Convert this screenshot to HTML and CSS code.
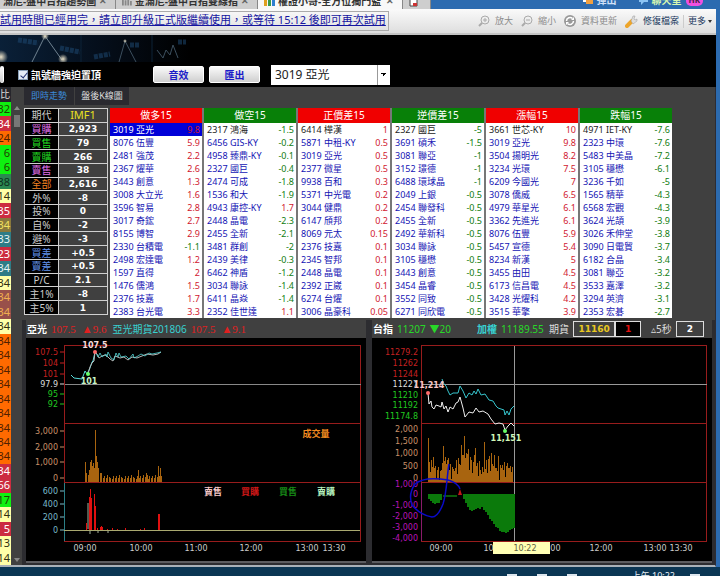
FILE: index.html
```html
<!DOCTYPE html>
<html lang="zh-Hant">
<head>
  <meta charset="UTF-8" />
  <title>權證小哥-全方位獨門監控</title>
  <link rel="stylesheet" href="styles.css">
</head>
<body>
  <nav class="tabs">
    <div class="tab tab-first"><span>滿尼-盤中台指趨勢圖</span><b>✕</b></div>
    <div class="tab">
      <svg width="11" height="10" viewBox="0 0 11 10"><path d="M0 0h2v9H0zM3 3h2v6H3zM6 1h2v8H6zM9 4h2v5H9z" fill="#888"/></svg>
      <span>金滿尼-盤中台指雙線指</span><b>✕</b>
    </div>
    <div class="tab active">
      <svg width="11" height="10" viewBox="0 0 11 10"><path d="M0 1h3v8H0z" fill="#e0a020"/><path d="M4 3h3v6H4z" fill="#3a9a4a"/><path d="M8 0h3v9H8z" fill="#2f7fd0"/></svg>
      <span>權證小哥-全方位獨門監</span><b>✕</b>
    </div>
    <div class="tab tab-new">
      <svg width="9" height="10" viewBox="0 0 9 10"><path d="M1 0v9h7V0" fill="#fff" stroke="#444"/><path d="M4 6h4v3H4z" fill="#c33"/></svg>
    </div>
    <div class="top-links">
      <svg width="10" height="8" viewBox="0 0 10 8"><path d="M0 0h6v4H0z" fill="#fff"/><path d="M3 2h7v4H3z" fill="#f0a040"/></svg>
      <a class="popout" href="#">彈出</a>
      <svg width="9" height="8" viewBox="0 0 9 8"><path d="M0 0h9v4H5L2 7V4H0z" fill="#8cc4f4"/></svg>
      <a class="chat" href="#">聊天室</a>
      <span class="badge">HK</span>
    </div>
  </nav>

  <header class="toolbar">
    <a class="notice" href="#">試用時間已經用完，請立即升級正式版繼續使用，或等待 15:12 後即可再次試用</a>
    <div class="tools">
      <button class="tool off"><svg width="12" height="12" viewBox="0 0 12 12" fill="none" stroke="#aaa"><circle cx="7" cy="5" r="4"/><path d="M5 5h4M7 3v4"/><path d="M4 8L1 11" stroke-width="2"/></svg>放大</button>
      <button class="tool off"><svg width="12" height="12" viewBox="0 0 12 12" fill="none" stroke="#aaa"><circle cx="7" cy="5" r="4"/><path d="M5 5h4"/><path d="M4 8L1 11" stroke-width="2"/></svg>縮小</button>
      <button class="tool off"><svg width="12" height="12" viewBox="0 0 12 12"><circle cx="6" cy="6" r="6" fill="#999"/><path d="M2.500 6a3.500 3.500 0 0 1 6-2.500M9.500 6a3.500 3.500 0 0 1-6 2.500" fill="none" stroke="#fff" stroke-width="1.500"/><path d="M7 5h3V2zM5 7H2v3z" fill="#fff"/></svg>資料更新</button>
      <button class="tool"><svg width="13" height="13" viewBox="0 0 13 13"><path d="M2 11L7 6" stroke="#eda52a" stroke-width="4" stroke-linecap="round"/><path d="M6 6L8 1l2 0-1 3 1 1 2-1 0 2-4 3z" fill="#ddd" stroke="#999" stroke-width=".5"/></svg>修復檔案</button>
      <button class="tool more">更多<i class="caret"></i></button>
    </div>
  </header>

  <div class="banner">
    <svg width="190" height="27" viewBox="0 0 190 27">
      <defs>
        <linearGradient id="night"><stop offset="0" stop-color="#0a2038"/><stop offset=".5" stop-color="#050f1c"/><stop offset="1" stop-color="#000"/></linearGradient>
        <radialGradient id="glow"><stop offset="0" stop-color="#e8e0c8"/><stop offset="1" stop-color="#e8e0c8" stop-opacity="0"/></radialGradient>
      </defs>
      <rect width="190" height="27" fill="url(#night)"/>
      <path d="M18 5l20 3M60 13l20 4M94 22l16-3M130 10h10M178 7h8" stroke="#1f4d78" stroke-width="5" stroke-dasharray="4 1" opacity=".5"/>
      <path d="M81 0v27M152 0v27" stroke="#0d2236"/>
      <path d="M32 27L45 1L62 25" fill="none" stroke="#6f8290"/>
      <path d="M119 27L125 6L136 27M157 15l6 8 3-8 4 5 3-10 5 13" fill="none" stroke="#3c4f5e"/>
      <circle cx="1" cy="22" r="7" fill="url(#glow)"/><circle cx="63" cy="24" r="5" fill="url(#glow)"/>
      <circle cx="45" cy="1" r="4" fill="url(#glow)"/><circle cx="125" cy="6" r="2" fill="url(#glow)"/>
    </svg>
  </div>

  <form class="controls">
    <button type="button" class="btn btn-cut" aria-label="上一頁"></button>
    <label class="pin"><input type="checkbox" checked>訊號牆強迫置頂</label>
    <button type="button" class="btn">音效</button>
    <button type="button" class="btn">匯出</button>
    <select class="stock" aria-label="股票"><option>3019 亞光</option></select>
  </form>

  <main>
    <aside class="signal">
      <div class="signal-list">
        <div class="signal-head">比</div>
        <div class="signal-rows" id="signalRows"></div>
      </div>
      <div class="scroll"><i class="up"></i><i class="thumb"></i><i class="down"></i></div>
    </aside>

    <section class="content">
      <div class="subtabs">
        <button class="on">即時走勢</button>
        <button>盤後K線圖</button>
      </div>

      <div class="boards">
        <table class="stats">
          <tr><th>期代</th><td class="imf">IMF1</td></tr>
          <tr><th class="violet">買購</th><td>2,923</td></tr>
          <tr><th class="lime">買售</th><td>79</td></tr>
          <tr><th class="lime">賣購</th><td>266</td></tr>
          <tr><th class="violet">賣售</th><td>38</td></tr>
          <tr><th class="orange">全部</th><td>2,616</td></tr>
          <tr><th>外%</th><td>-8</td></tr>
          <tr><th>投%</th><td>0</td></tr>
          <tr><th>自%</th><td>-2</td></tr>
          <tr><th>避%</th><td>-3</td></tr>
          <tr><th class="blue">買差</th><td>+0.5</td></tr>
          <tr><th class="blue">賣差</th><td>+0.5</td></tr>
          <tr><th>P/C</th><td>2.1</td></tr>
          <tr><th>主1%</th><td>-8</td></tr>
          <tr><th>主5%</th><td>1</td></tr>
        </table>
        <div class="quotes" id="quotes"></div>
      </div>

      <div class="charts">
        <article class="panel">
          <div class="info">
            <b>亞光</b><span class="serif">107.5</span><span class="serif">▲9.6</span>
            <span class="cyan">亞光期貨201806</span><span class="serif">107.5</span><span class="serif">▲9.1</span>
          </div>
          <svg viewBox="26 338 340 223" id="stockChart">
            <rect x="26" y="338" width="340" height="223" fill="#000"/>
            <g fill="none" stroke="#981c1c" shape-rendering="crispEdges">
              <path d="M64.500 345.500H360.500V541.500H64.500zM64.500 423.500H360.500M64.500 482.500H360.500"/>
              <path d="M64.500 483V541" stroke="#2b7f86"/>
              <path d="M64.500 384.500H360.500" stroke="#888"/>
            </g>
            <g class="bars" fill="#a8640f"></g>
            <g class="bars2" fill="#e01010"></g>
            <path d="M64 530.500H360" stroke="#a9a970"/>
            <path d="M88 503v26M90 531v3M98 531v2M108 531v2" stroke="#e8ffe0" stroke-opacity=".7"/>
            <path d="M71 375L74 378L82 379L85 371L87 374L90 368L92 362L93 361L95 352" fill="none" stroke="#56d8d8"/>
            <path d="M88 374L90 367L92 363L94 361L95 352L97 354L99 358L102 356L105 355L108 357L110 359L113 361L115 356L120 358L124 357L128 360L132 357L137 358L142 356L147 354L153 355L158 354L161 352" fill="none" stroke="#b8b8b8"/>
            <path d="M96 353L98 357L100 353L102 357L106 354L107 357L108 352L111 358L114 360L116 353L118 357L119 353L121 357L126 356L129 359L133 354L134 358L138 356L141 354L145 356L149 353L152 354L157 353L161 352" fill="none" stroke="#56d8d8" stroke-opacity=".8"/>
            <circle cx="95" cy="352" r="2" fill="#ff6b6b"/><circle cx="88" cy="374" r="2" fill="#6f6"/>
            <g class="axis"></g>
            <g class="peak"><text x="95" y="348" fill="#f6dcdc">107.5</text><text x="89" y="384" fill="#c8f6c8">101</text></g>
            <g class="legend">
              <text x="316" y="437" fill="#f08a20">成交量</text>
              <text x="213" y="495" fill="#f6c8c8">賣售</text>
              <text x="250" y="495" fill="#d01818">買購</text>
              <text x="288" y="495" fill="#178a17">買售</text>
              <text x="326" y="495" fill="#b8f6c0">賣購</text>
            </g>
          </svg>
        </article>

        <article class="panel">
          <div class="info">
            <b>台指</b><span class="green">11207</span><span class="green">▼20</span>
            <span class="cyan push">加權</span><span class="green clip">11189.55</span>
            <span class="white">期貨</span>
            <span class="boxes"><output class="gold">11160</output><output class="red">1</output></span>
            <span class="white">▵5秒</span><output class="sec">2</output>
          </div>
          <svg viewBox="372 338 340 223" id="indexChart">
            <rect x="372" y="338" width="340" height="223" fill="#000"/>
            <g fill="none" stroke="#981c1c" shape-rendering="crispEdges">
              <path d="M421.500 345.500H706.500V541.500H421.500zM421.500 423.500H706.500M421.500 482.500H706.500"/>
              <path d="M421.500 483V541" stroke="#8a1a6a"/>
              <path d="M421.500 384.500H706.500M514.500 345.500V541" stroke="#999"/>
            </g>
            <g class="bars" fill="#a8640f"></g>
            <g class="bars2" fill="#0b7a0b"></g>
            <path d="M443 496H457" stroke="#0b5a0b" stroke-width="2"/>
            <path d="M458 495L460 489L462 495z" fill="#c01818"/>
            <path d="M428 393L429 404L431 401L432 407L434 409L436 405L439 406L441 407L442 402L444 409L446 406L448 412L450 407L453 409L456 403L458 402L460 397L463 408L465 417L469 412L473 413L476 408L479 412L483 411L488 414L491 419L495 424L499 423L503 424L505 430L508 426L511 423L514 426" fill="none" stroke="#eee"/>
            <path d="M442 379L444 384L446 386L448 391L450 395L453 393L458 393L460 386L463 391L466 398L469 393L472 395L474 391L476 394L478 389L481 395L485 394L489 400L493 401L496 406L498 408L501 409L504 410L505 415L507 411L509 415L511 409L514 406" fill="none" stroke="#36c4cc"/>
            <circle cx="428" cy="393" r="2" fill="#ff6b6b"/><circle cx="505" cy="431" r="2" fill="#6f6"/>
            <g class="axis"></g>
            <g class="peak"><text x="429" y="388" fill="#f6c8c8">11,214</text><text x="506" y="441" fill="#d0f6b8">11,151</text></g>
            <path d="M449 464C447 474 447 492 443 504Q438 517 432 517Q420 515 412 505Q408 494 415 484Q424 476 448 480Q458 483 460 489" fill="none" stroke="#0a0ac8" stroke-width="1.500"/>
            <rect x="493" y="542" width="57" height="12" fill="#ffffb4"/>
            <text class="now" x="525" y="551">10:22</text>
          </svg>
        </article>
      </div>
    </section>
  </main>

  <footer class="taskbar"><i></i><i></i><i></i><time>上午 10:22</time><i></i></footer>

  <script src="script.js"></script>
</body>
</html>
```
FILE: styles.css
```css
* { box-sizing: border-box; }
body {
  margin: 0;
  min-height: 100vh;
  display: flex;
  flex-direction: column;
  background: #2c6bb0;
  font-family: "Noto Sans", "Noto Sans CJK TC", sans-serif;
  font-size: 10px;
  line-height: 12px;
  overflow-x: hidden;
}
button, select, input { font: inherit; margin: 0; }
a { text-decoration: none; }

.tabs {
  display: flex;
  height: 9px;
  overflow: hidden;
}
.tab {
  display: flex;
  align-items: flex-end;
  gap: 3px;
  width: 142px;
  padding: 0 8px 2px 6px;
  background: #cecece;
  border-right: 1px solid #888;
  color: #333;
  font-weight: bold;
  white-space: nowrap;
}
.tab b { margin-left: auto; font-size: 9px; color: #666; }
.tab-first { width: 116px; padding-left: 3px; }
.tab.active { background: #f8f8f8; width: 145px; }
.tab-new { width: 28px; }
.top-links {
  display: flex;
  align-items: flex-end;
  gap: 4px;
  margin-left: auto;
  padding: 0 17px 3px 0;
  font-weight: bold;
}
.popout { color: #d0e0f8; margin-right: 18px; }
.chat { color: #d8f8b0; }
.badge {
  background: #f050e0;
  color: #402040;
  border-radius: 5px;
  padding: 0 3px;
  font-size: 8px;
}

.toolbar {
  display: flex;
  align-items: center;
  height: 26px;
  margin-right: 4px;
  background: linear-gradient(#fafafa, #dedede);
  border-bottom: 2px solid #c4c4c4;
}
.notice {
  padding: 1px 2px 3px 0;
  border: 1px solid #aaa;
  border-left: 0;
  color: #1414a0;
  font-size: 11px;
  line-height: 14px;
  text-decoration: underline;
  white-space: nowrap;
}
.tools { display: flex; gap: 8px; margin-left: auto; padding-right: 4px; }
.tool {
  display: flex;
  align-items: center;
  gap: 5px;
  padding: 0;
  border: 0;
  background: none;
  color: #1c3a60;
  font-size: 9px;
  white-space: nowrap;
}
.tool.off { color: #8c8c8c; }
.more { gap: 2px; margin-left: -4px; padding-left: 4px; border-left: 1px solid #ccc; }
.caret { border: 2px solid transparent; border-top: 3px solid #333; border-bottom: 0; }

.banner { height: 27px; margin-right: 4px; background: #000; }
.banner svg { display: block; }

.controls {
  display: flex;
  align-items: center;
  height: 25px;
  margin-right: 4px;
  background: #000;
}
.btn {
  width: 51px;
  height: 17px;
  margin-right: 5px;
  padding: 0;
  border: 1px solid #fff;
  border-radius: 2px;
  background: linear-gradient(#fafafa, #cfcfcf);
  color: #1c1cc8;
  font-weight: bold;
}
.btn-cut { width: 4px; margin-right: 14px; border-left: 0; }
.pin {
  display: flex;
  align-items: center;
  gap: 3px;
  margin-right: 52px;
  color: #fff;
  font-weight: bold;
}
.pin input {
  appearance: none;
  width: 10px;
  height: 10px;
  background: #e4ecf6;
  border: 1px solid #8aa0b8;
}
.pin input:checked::before {
  content: "";
  display: block;
  width: 3px;
  height: 6px;
  margin: 0 3px;
  border: solid #203070;
  border-width: 0 1px 1px 0;
  transform: rotate(40deg);
}
.stock {
  appearance: none;
  width: 119px;
  height: 20px;
  margin-left: 6px;
  padding: 0 14px 0 4px;
  border: 0;
  border-radius: 0;
  color: #222;
  font-size: 12px;
  background:
    linear-gradient(315deg, transparent 50%, #000 50%) right 3px center / 3px 3px no-repeat,
    linear-gradient(45deg, transparent 50%, #000 50%) right 6px center / 3px 3px no-repeat,
    linear-gradient(#999, #999) right 12px center / 1px 100% no-repeat,
    #fff;
}

main {
  flex: 1;
  display: flex;
  margin-right: 4px;
  background: #404040;
  border-bottom: 2px solid #a8b0b8;
  border-right: 1px solid #2c2c34;
}
.signal { display: flex; width: 22px; }
.signal-list { display: flex; flex-direction: column; width: 11px; overflow: hidden; }
.signal-head {
  height: 15px;
  background: #26262c;
  color: #ddd;
  line-height: 15px;
}
.signal-rows { flex: 1; display: flex; flex-direction: column; }
.signal-rows div {
  flex: 1;
  display: flex;
  align-items: center;
  justify-content: flex-end;
  padding-right: 1px;
  font-size: 11px;
}
.s-green { background: #0ff010; color: #204000; }
.s-red { background: #cc2c40; color: #fff; }
.s-orange { background: #ff6a00; color: #502000; }
.s-forest { background: #2b8750; color: #103020; }
.s-yellow { background: #ffffa8; color: #303010; }
.s-olive { background: #88783c; color: #f0e060; }
.s-teal { background: #2e7c86; color: #e8f4f4; }
.s-brown { background: #98504a; color: #f0b050; }

.scroll {
  display: flex;
  flex-direction: column;
  align-items: center;
  gap: 5px;
  flex: 1;
  padding: 19px 0 3px;
}
.up, .down { border: 3px solid transparent; border-top: 0; border-bottom: 4px solid #888; }
.down { border-bottom: 0; border-top: 4px solid #888; margin-top: auto; }
.thumb { width: 6px; height: 12px; background: #777; }

.content { flex: 1; min-width: 0; }
.subtabs { display: flex; gap: 1px; height: 18px; padding-left: 2px; }
.subtabs button {
  width: 54px;
  padding: 0;
  border: 0;
  background: #2a2a30;
  color: #ddd;
  font-size: 9px;
  white-space: nowrap;
}
.subtabs .on { width: 50px; color: #3c8cdc; }

.boards { display: flex; gap: 2px; padding: 3px 43px 0 2px; }
.stats {
  width: 84px;
  height: 207px;
  border-collapse: collapse;
  text-align: center;
}
.stats th, .stats td {
  padding: 0;
  border: 1px solid #d0d0d0;
  line-height: 12px;
  color: #fff;
}
.stats th { width: 34px; background: #000; color: #ccc; font-weight: normal; }
.stats td { font-family: "DejaVu Sans", sans-serif; font-size: 9px; font-weight: bold; }
.stats .imf { color: #e8e020; font: 11px/12px "Noto Sans", sans-serif; }
.stats .violet { color: #e070e8; }
.stats .lime { color: #20d820; }
.stats .orange { color: #f08020; }
.stats .blue { color: #6090e8; }

.quotes {
  flex: 1;
  display: grid;
  grid-template-columns: repeat(6, 1fr);
  gap: 2px;
  background: #777;
}
.quote { width: 100%; border-collapse: collapse; background: #fff; }
.quote th {
  height: 15px;
  padding: 0;
  color: #fff;
  font-size: 10px;
  font-weight: normal;
  line-height: 15px;
}
.quote th.rise { background: #f00000; }
.quote th.fall { background: #088008; }
.quote td {
  height: 13px;
  padding: 0 0 0 3px;
  color: #1414b4;
  font-size: 9px;
  line-height: 13px;
  white-space: nowrap;
}
.quote td:last-child { padding: 0 2px 0 0; text-align: right; }
.quote tr:nth-child(2) td { color: #222; }
.quote td.up-val, .quote tr:nth-child(2) .up-val { color: #d01830; }
.quote td.down-val, .quote tr:nth-child(2) .down-val { color: #107c10; }
.quote .picked td { background: #0000d8; }
.quote tr.picked td:first-child { color: #fff; }

.charts {
  display: grid;
  grid-template-columns: 1fr 1fr;
  gap: 6px;
  margin-top: 2px;
  padding: 0 3px 2px 4px;
  background: #2c2c30;
}
.panel { min-width: 0; border-bottom: 2px solid #5c5c60; }
.panel svg { display: block; width: 100%; }
.info {
  display: flex;
  align-items: center;
  height: 18px;
  gap: 4px;
  padding-left: 1px;
  background: #404040;
  color: #fff;
  white-space: nowrap;
}
.serif { color: #e02020; font: 11px/12px "Liberation Serif", serif; margin-right: 2px; }
.cyan { color: #38d0d0; }
.green { color: #28d828; }
.white { color: #ddd; }
.push { margin-left: 22px; font-weight: bold; }
.clip { width: 44px; overflow: hidden; }
.boxes { display: flex; margin-right: 6px; }
.info output {
  width: 26px;
  border: 1px solid #ddd;
  font: bold 9px/14px "DejaVu Sans", sans-serif;
  text-align: center;
}
.info .gold { width: 42px; color: #e8c820; }
.info .red { background: #000; color: #e01010; }
.info .sec { width: 28px; }

svg text { font: 8px "DejaVu Sans", sans-serif; }
.peak text { font-weight: bold; text-anchor: middle; }
.legend text { font: bold 9px "Noto Sans CJK TC", sans-serif; text-anchor: middle; }
.now { fill: #606040; text-anchor: middle; }

.taskbar {
  display: flex;
  align-items: flex-start;
  justify-content: flex-end;
  gap: 20px;
  height: 10px;
  padding: 3px 20px 0 0;
  overflow: hidden;
  background: #0b3654;
  color: #e8eef4;
  font-size: 9px;
}
.taskbar i { width: 10px; height: 6px; margin-top: 4px; background: #dde6ee; }
.taskbar time { margin: 0 -5px 0 35px; }
```
FILE: script.js
```js
const signals = [
  ["green", 32], ["red", 34], ["orange", 24], ["green", 6], ["green", 6], ["forest", 38],
  ["yellow", 14], ["red", 35], ["olive", 34], ["teal", 33], ["red", 23], ["teal", 34],
  ["yellow", 34], ["brown", 34], ["brown", 34], ["yellow", 34], ["orange", 34], ["orange", 34],
  ["orange", 34], ["orange", 34], ["orange", 34], ["orange", 34], ["orange", 34], ["orange", 34],
  ["orange", 34], ["red", 34], ["red", 66], ["green", 17], ["yellow", 14], ["red", 5],
  ["yellow", 13], ["yellow", 14]
];
document.getElementById("signalRows").innerHTML =
  signals.map(([color, n]) => `<div class="s-${color}">${n}</div>`).join("");

const boards = [
  ["做多15", "rise", "3019 亞光|9.8,8076 伍豐|5.9,2481 強茂|2.2,2367 燿華|2.6,3443 創意|1.3,3008 大立光|1.6,3596 智易|2.8,3017 奇鋐|2.7,8155 博智|2.9,2330 台積電|-1.1,2498 宏達電|1.2,1597 直得|2,1476 儒鴻|1.5,2376 技嘉|1.7,2383 台光電|3.3"],
  ["做空15", "fall", "2317 鴻海|-1.5,6456 GIS-KY|-0.2,4958 臻鼎-KY|-0.1,2327 國巨|-0.4,2474 可成|-1.8,1536 和大|-1.9,4943 康控-KY|1.7,2448 晶電|-2.3,2455 全新|-2.1,3481 群創|-2,2439 美律|-0.3,6462 神盾|-1.2,3034 聯詠|-1.4,6411 晶焱|-1.4,2352 佳世達|1.1"],
  ["正價差15", "rise", "6414 樺漢|1,5871 中租-KY|0.5,3019 亞光|0.5,2377 微星|0.5,9938 百和|0.3,5371 中光電|0.2,3044 健鼎|0.2,6147 頎邦|0.2,8069 元太|0.15,2376 技嘉|0.1,2345 智邦|0.1,2448 晶電|0.1,2392 正崴|0.1,6274 台燿|0.1,3006 晶豪科|0.05"],
  ["逆價差15", "fall", "2327 國巨|-5,3691 碩禾|-1.5,3081 聯亞|-1,3152 璟德|-1,6488 環球晶|-1,2049 上銀|-0.5,2454 聯發科|-0.5,2455 全新|-0.5,2492 華新科|-0.5,3034 聯詠|-0.5,3105 穩懋|-0.5,3443 創意|-0.5,3454 晶睿|-0.5,3552 同致|-0.5,6271 同欣電|-0.5"],
  ["漲幅15", "rise", "3661 世芯-KY|10,3019 亞光|9.8,3504 揚明光|8.2,3234 光環|7.5,6209 今國光|7,3078 僑威|6.5,4979 華星光|6.1,3362 先進光|6.1,8076 伍豐|5.9,5457 宣德|5.4,8234 新漢|5,3455 由田|4.5,6173 信昌電|4.5,3428 光燿科|4.2,3515 華擎|3.9"],
  ["跌幅15", "fall", "4971 IET-KY|-7.6,2323 中環|-7.6,5483 中美晶|-7.2,3105 穩懋|-6.1,3236 千如|-5,1565 精華|-4.3,6568 宏觀|-4.3,3624 光頡|-3.9,3026 禾伸堂|-3.8,3090 日電貿|-3.7,6182 合晶|-3.4,3081 聯亞|-3.2,3533 嘉澤|-3.2,3294 英濟|-3.1,2353 宏碁|-2.7"]
];
document.getElementById("quotes").innerHTML = boards.map(([title, dir, list], b) => {
  const rows = list.split(",").map((item, i) => {
    const [name, value] = item.split("|");
    const picked = b === 0 && i === 0 ? ' class="picked"' : "";
    return `<tr${picked}><td>${name}</td><td class="${value < 0 ? "down-val" : "up-val"}">${value}</td></tr>`;
  });
  return `<table class="quote"><tr><th colspan="2" class="${dir}">${title}</th></tr>${rows.join("")}</table>`;
}).join("");

// labels: [text, centre y, colour], times: [text, centre x]
function drawAxis(chart, right, labels, times, tick) {
  let out = "";
  labels.forEach(([text, y, color]) => {
    out += `<text x="${right}" y="${y + 3}" fill="${color}" text-anchor="end">${text}</text>`;
    if (tick) out += `<path d="M60 ${y}h4" stroke="${color}"/>`;
  });
  times.forEach(([text, x]) => {
    out += `<text x="${x}" y="551" fill="#ccc" text-anchor="middle">${text}</text>`;
  });
  chart.querySelector(".axis").innerHTML = out;
}

// a negative height hangs below the base line
function drawBars(group, bars, base, width) {
  group.innerHTML = bars.map(([x, h]) =>
    `<rect x="${x}" y="${h < 0 ? base : base - h}" width="${width}" height="${Math.abs(h)}"/>`).join("");
}

const RED = "#c42020", GREEN = "#20c820", SAND = "#c89068", BLUE = "#78b8c8", PINK = "#b814b8";
const stock = document.getElementById("stockChart");
drawAxis(stock, 58,
  [["107.5", 352, RED], ["104", 363, RED], ["101", 374, RED], ["97.9", 384, "#ddd"], ["95", 394, GREEN], ["92", 404, GREEN],
   ["3,000", 431, SAND], ["2,000", 447, SAND], ["1,000", 462, SAND], ["0", 478, SAND],
   ["600", 491, BLUE], ["400", 504, BLUE], ["200", 517, BLUE], ["0", 530, BLUE]],
  [["09:00", 85], ["10:00", 141], ["11:00", 196], ["12:00", 251], ["13:00", 307], ["13:30", 334]], true);

const volume = [[85, 20], [86, 9], [88, 7], [89, 12], [90, 20], [91, 22], [92, 16], [93, 19], [94, 14], [95, 52], [96, 26], [97, 20], [98, 14], [100, 9], [101, 9], [138, 12], [146, 9], [147, 7], [158, 16], [159, 6], [160, 14], [161, 6]];
const small = [5, 4, 6, 3, 4, 7, 3, 5, 4, 8, 3, 6];
for (let x = 102, i = 0; x < 158; x++, i++) if (i % 3) volume.push([x, small[i % 12]]);
drawBars(stock.querySelector(".bars"), volume, 482, 1);
drawBars(stock.querySelector(".bars2"),
  [[86, 7], [89, 33], [90, 41], [91, 32], [94, 36], [95, 24], [97, 2], [100, 3], [101, 4], [102, 3], [107, 1], [112, 2], [117, 1], [125, 2], [140, 1], [144, 2], [158, 16], [159, 16]], 530, 1);

const index = document.getElementById("indexChart");
drawAxis(index, 418,
  [["11279.2", 352, RED], ["11262", 363, RED], ["11244", 374, RED], ["11227", 384, "#ddd"], ["11210", 395, GREEN], ["11192", 405, GREEN], ["11174.8", 416, GREEN],
   ["2,000", 429, SAND], ["1,500", 441, SAND], ["1,000", 453, SAND], ["500", 466, SAND], ["0", 478, SAND],
   ["1,000", 484, PINK], ["0", 494, PINK], ["-1,000", 505, PINK], ["-2,000", 516, PINK], ["-3,000", 527, PINK], ["-4,000", 538, PINK]],
  [["09:00", 441], ["10:00", 495], ["11:00", 549], ["12:00", 601], ["13:00", 655], ["13:30", 681]]);

const indexVolume = [44, 20, 18, 22, 15, 33, 14, 16, 11, 12, 15, 10, 11, 12, 27, 36, 21, 33, 18, 22, 32, 12, 18, 11, 15, 13, 19, 14, 22, 16, 24, 18, 25, 37, 27, 35, 46, 24, 37, 28, 33, 20, 25, 22, 17, 20, 27, 42, 16, 19, 14, 21, 12, 16, 15, 10, 48, 13, 22, 17, 23, 26, 19, 29, 18, 24, 27, 14, 22, 11, 26, 10, 17, 14, 25, 12, 20, 13, 16, 19, 22, 14, 16, 18, 15];
drawBars(index.querySelector(".bars"), indexVolume.map((h, i) => [428 + i, i % 3 === 2 ? h - 8 : h]), 482, 1);

const net = [[428, -5], [430, -7], [432, -9], [434, -10], [436, -9], [438, -9], [440, -6]];
[5, 9, 13, 16, 17, 16, 15, 14, 15, 13, 16, 18, 21, 25, 27, 30, 33, 34, 37, 38, 38, 39, 38, 36, 35, 34]
  .forEach((h, i) => net.push([463 + i * 2, -h]));
drawBars(index.querySelector(".bars2"), net, 494, 2);
```
